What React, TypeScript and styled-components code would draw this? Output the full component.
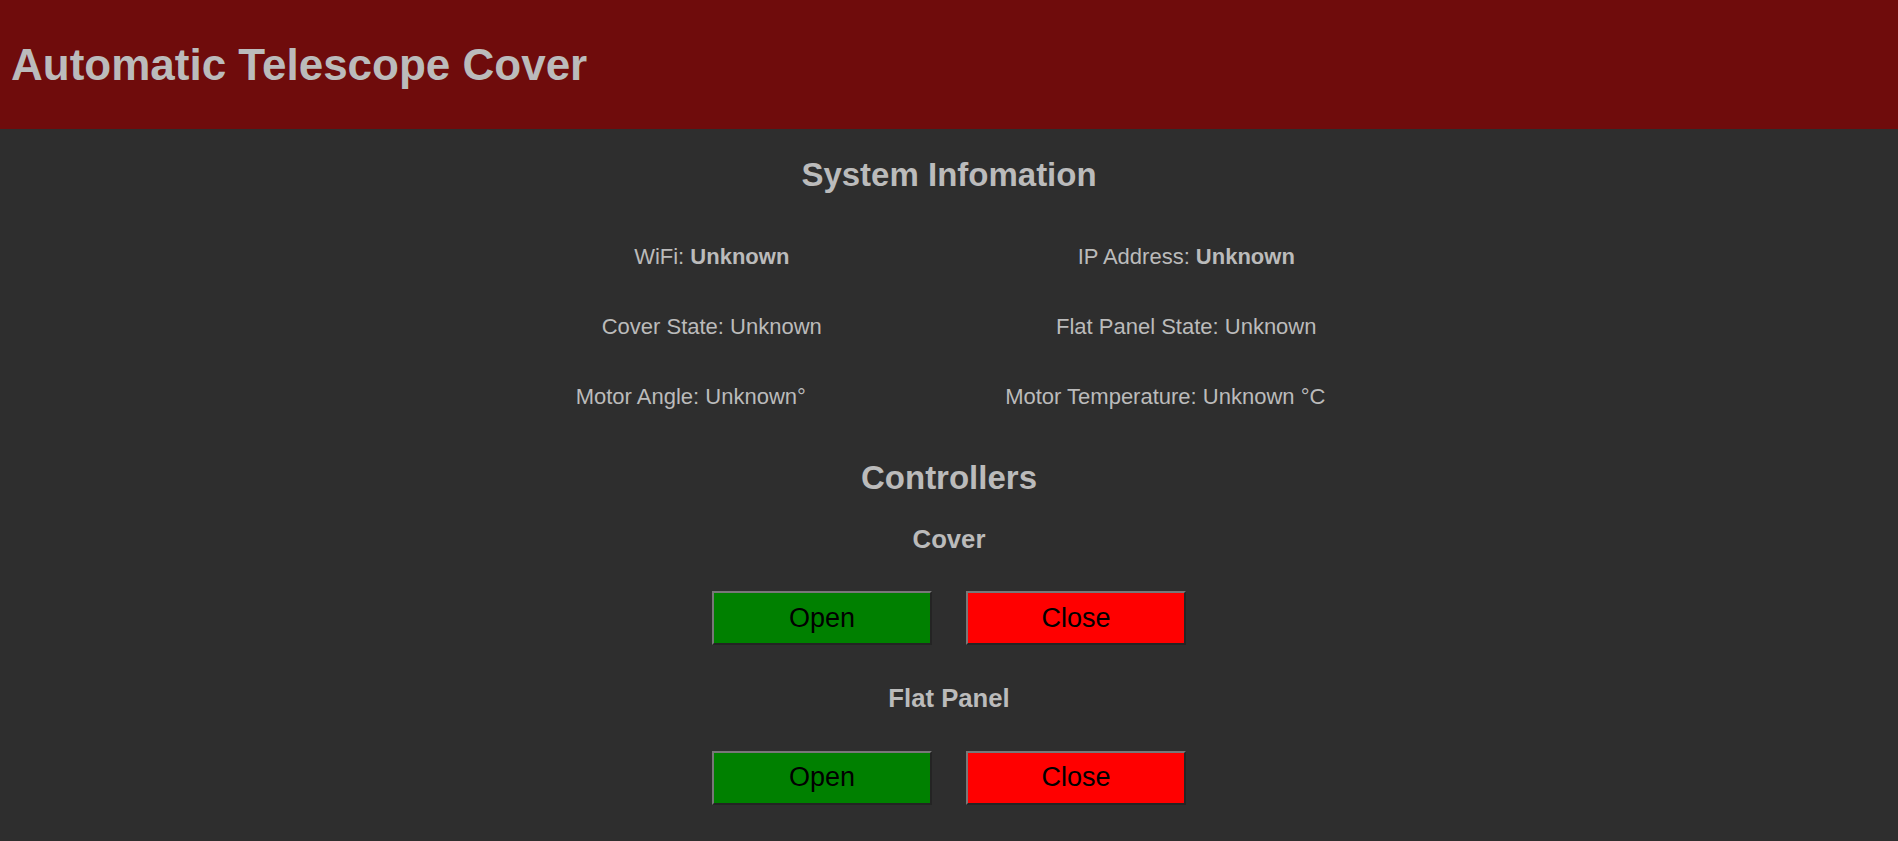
import React from "react";
import styled, { createGlobalStyle } from "styled-components";

const Global = createGlobalStyle`
  html, body { margin: 0; padding: 0; }
  body {
    background: #2e2e2e;
    color: #bbbbbb;
    font-family: "Liberation Sans", Arial, sans-serif;
    font-size: 22px;
  }
`;

const Header = styled.header`
  background: #6f0c0c;
  padding: 10px 11px;
`;

const Title = styled.h1`
  margin: 29.5px 0;
  font-size: 44px;
  font-weight: bold;
  color: #bbbbbb;
`;

const Main = styled.main`
  text-align: center;
`;

const SectionTitle = styled.h2`
  margin: 27.4px 0;
  font-size: 33px;
  font-weight: bold;
`;

const SubTitle = styled.h3`
  margin: 25.7px 0;
  font-size: 25.7px;
  font-weight: bold;
`;

const InfoGrid = styled.div`
  width: 50%;
  margin: 0 auto;
  display: grid;
  grid-template-columns: 1fr 1fr;
  grid-auto-rows: 70px;
`;

const InfoCell = styled.div<{ $trail?: boolean }>`
  display: flex;
  align-items: center;
  justify-content: center;
  padding-right: ${(p) => (p.$trail ? "42px" : "0")};
`;

const Value = styled.b`
  font-weight: bold;
`;

const ButtonRow = styled.div`
  display: flex;
  justify-content: center;
  gap: 34px;
  padding: 12px 0 13px;
`;

const ActionButton = styled.button<{ $variant: "open" | "close" }>`
  width: 220px;
  height: 54px;
  background: ${(p) => (p.$variant === "open" ? "#008000" : "#ff0000")};
  color: #000;
  font-family: "Liberation Sans", Arial, sans-serif;
  font-size: 27px;
  border: 2px solid;
  border-color: #777777 #242424 #242424 #777777;
  padding: 0;
  cursor: pointer;
`;

const info: Array<[string, string, boolean, boolean]> = [
  ["WiFi: ", "Unknown", true, false],
  ["IP Address: ", "Unknown", true, false],
  ["Cover State: ", "Unknown", false, false],
  ["Flat Panel State: ", "Unknown", false, false],
  ["Motor Angle: ", "Unknown°", false, true],
  ["Motor Temperature: ", "Unknown °C", false, true],
];

function Controls({ label }: { label: string }) {
  return (
    <>
      <SubTitle>{label}</SubTitle>
      <ButtonRow>
        <ActionButton $variant="open">Open</ActionButton>
        <ActionButton $variant="close">Close</ActionButton>
      </ButtonRow>
    </>
  );
}

export default function App() {
  return (
    <>
      <Global />
      <Header>
        <Title>Automatic Telescope Cover</Title>
      </Header>
      <Main>
        <SectionTitle>System Infomation</SectionTitle>
        <InfoGrid>
          {info.map(([label, value, bold, trail]) => (
            <InfoCell key={label} $trail={trail}>
              <span>
                {label}
                {bold ? <Value>{value}</Value> : value}
              </span>
            </InfoCell>
          ))}
        </InfoGrid>
        <SectionTitle>Controllers</SectionTitle>
        <Controls label="Cover" />
        <Controls label="Flat Panel" />
      </Main>
    </>
  );
}
